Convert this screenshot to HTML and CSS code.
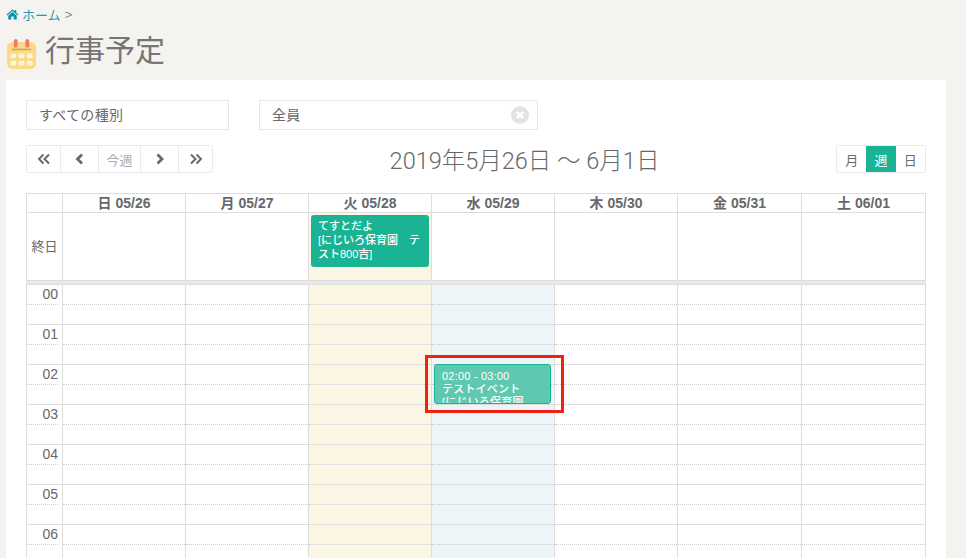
FILE: index.html
```html
<!DOCTYPE html>
<html lang="ja">
<head>
<meta charset="utf-8">
<title>行事予定</title>
<link rel="stylesheet" href="styles.css">
</head>
<body>
<nav class="crumbs">
  <svg class="home-icon" viewBox="0 0 26 22"><path d="M13 1 L1 11.2 L2.6 13 L13 4.2 L23.4 13 L25 11.2 L20.5 7.4 V2 H17.3 V4.6 Z M13 6.2 L4.5 13.4 V21 H10.5 V15 H15.5 V21 H21.5 V13.4 Z"/></svg>
  <a class="crumb-link">ホーム</a><span class="crumb-sep">&gt;</span>
</nav>
<header class="page-title">
  <svg class="cal-icon" viewBox="0 0 32 32">
    <rect x="1" y="4" width="30" height="28" rx="6" fill="#fcd983"/>
    <rect x="6" y="11" width="20" height="1.6" fill="#c9a860"/>
    <rect x="8" y="1" width="4" height="9" rx="2" fill="#f2786a"/>
    <rect x="20" y="1" width="4" height="9" rx="2" fill="#f2786a"/>
    <g fill="#fff5dc">
      <rect x="4.500" y="16" width="6" height="5" rx="1.500"/><rect x="13" y="16" width="6" height="5" rx="1.500"/><rect x="21.500" y="16" width="6" height="5" rx="1.500"/>
      <rect x="4.500" y="23.500" width="6" height="5" rx="1.500"/><rect x="13" y="23.500" width="6" height="5" rx="1.500"/><rect x="21.500" y="23.500" width="6" height="5" rx="1.500"/>
    </g>
  </svg>
  <h1>行事予定</h1>
</header>
<main class="card">
  <div class="filters">
    <div class="select select-type">すべての種別</div>
    <div class="select select-member">全員
      <svg class="clear-icon" viewBox="0 0 18 18"><circle cx="9" cy="9" r="9" fill="#e1e3e5"/><path d="M5.800 5.800 L12.200 12.200 M12.200 5.800 L5.800 12.200" stroke="#fff" stroke-width="2.600"/></svg>
    </div>
  </div>
  <div class="toolbar">
    <div class="btn-group">
      <button class="btn btn-first"><svg viewBox="0 0 14 12"><path d="M6.500 1.500 L2 6 L6.500 10.500 M12 1.500 L7.500 6 L12 10.500"/></svg></button>
      <button class="btn btn-single"><svg viewBox="0 0 14 12"><path d="M9 1.500 L4.500 6 L9 10.500"/></svg></button>
      <button class="btn btn-today">今週</button>
      <button class="btn btn-single"><svg viewBox="0 0 14 12"><path d="M4.500 1.500 L9 6 L4.500 10.500"/></svg></button>
      <button class="btn btn-last"><svg viewBox="0 0 14 12"><path d="M2 1.500 L6.500 6 L2 10.500 M7.500 1.500 L12 6 L7.500 10.500"/></svg></button>
    </div>
    <h2 class="range">2019年5月26日 〜 6月1日</h2>
    <div class="btn-group view-group">
      <button class="btn btn-view">月</button>
      <button class="btn btn-view is-active">週</button>
      <button class="btn btn-view">日</button>
    </div>
  </div>
  <section class="calendar">
    <div class="row head-row">
      <div class="cell"></div>
      <div class="cell">日 05/26</div><div class="cell">月 05/27</div><div class="cell">火 05/28</div><div class="cell">水 05/29</div><div class="cell">木 05/30</div><div class="cell">金 05/31</div><div class="cell">土 06/01</div>
    </div>
    <div class="row allday-row">
      <div class="cell allday-label">終日</div>
      <div class="cell"></div><div class="cell"></div>
      <div class="cell is-today"><div class="allday-event">てすとだよ<br>[にじいろ保育園　テスト800吉]</div></div>
      <div class="cell"></div><div class="cell"></div><div class="cell"></div><div class="cell"></div>
    </div>
    <div class="divider"></div>
    <div class="row time-grid">
      <div class="col axis">
        <div class="hour">00</div><div class="hour">01</div><div class="hour">02</div><div class="hour">03</div><div class="hour">04</div><div class="hour">05</div><div class="hour">06</div>
      </div>
      <div class="col"><div class="slot"></div><div class="slot"></div><div class="slot"></div><div class="slot"></div><div class="slot"></div><div class="slot"></div><div class="slot"></div></div>
      <div class="col"><div class="slot"></div><div class="slot"></div><div class="slot"></div><div class="slot"></div><div class="slot"></div><div class="slot"></div><div class="slot"></div></div>
      <div class="col is-today"><div class="slot"></div><div class="slot"></div><div class="slot"></div><div class="slot"></div><div class="slot"></div><div class="slot"></div><div class="slot"></div></div>
      <div class="col is-selected"><div class="slot"></div><div class="slot"></div><div class="slot"></div><div class="slot"></div><div class="slot"></div><div class="slot"></div><div class="slot"></div>
        <div class="timed-event"><div>02:00 - 03:00</div><div>テストイベント</div><div>[にじいろ保育園</div></div>
      </div>
      <div class="col"><div class="slot"></div><div class="slot"></div><div class="slot"></div><div class="slot"></div><div class="slot"></div><div class="slot"></div><div class="slot"></div></div>
      <div class="col"><div class="slot"></div><div class="slot"></div><div class="slot"></div><div class="slot"></div><div class="slot"></div><div class="slot"></div><div class="slot"></div></div>
      <div class="col"><div class="slot"></div><div class="slot"></div><div class="slot"></div><div class="slot"></div><div class="slot"></div><div class="slot"></div><div class="slot"></div></div>
    </div>
  </section>
</main>
<div class="highlight"></div>
</body>
</html>
```
FILE: styles.css
```css
* { box-sizing: border-box; }
html, body { height: 100%; overflow: hidden; }
body {
  margin: 0;
  background: #f4f3ef;
  color: #66686b;
  font-family: "Liberation Sans", "Noto Sans CJK JP", sans-serif;
  font-size: 13px;
  position: relative;
}
.crumbs {
  display: flex;
  align-items: center;
  height: 28px;
  padding: 0 0 0 6px;
  font-size: 13px;
}
.home-icon { width: 13px; height: 11px; fill: #1291ad; margin-right: 3px; }
.crumb-link { color: #1a9cbb; }
.crumb-sep { color: #888; margin-left: 4px; }
.page-title {
  display: flex;
  align-items: center;
  height: 52px;
  padding-left: 6px;
  padding-bottom: 7px;
}
.cal-icon { width: 31px; height: 31px; margin: 5px 8px 0 0; }
.page-title h1 {
  margin: 0;
  font-size: 30px;
  font-weight: 400;
  color: #757575;
  line-height: 1;
}
.card {
  margin: 0 20px 0 6px;
  padding: 20px;
  background: #fff;
  height: 478px;
  overflow: hidden;
}
.filters { display: flex; gap: 30px; }
.select {
  height: 30px;
  border: 1px solid #e5e6e7;
  display: flex;
  align-items: center;
  padding-bottom: 2px;
  font-size: 14px;
  letter-spacing: 0.300px;
  color: #66686b;
}
.select-type { width: 203px; padding-left: 12px; }
.select-member { width: 279px; padding-left: 12px; justify-content: space-between; padding-right: 8px; }
.clear-icon { width: 18px; height: 18px; margin-top: 2px; }
.toolbar {
  display: flex;
  align-items: center;
  justify-content: space-between;
  margin-top: 15px;
  height: 28px;
}
.btn-group {
  display: flex;
  border: 1px solid #e7eaec;
  border-radius: 3px;
  height: 28px;
  overflow: hidden;
}
.btn {
  border: 0;
  border-left: 1px solid #e7eaec;
  background: #fff;
  padding: 0;
  font: inherit;
  color: #676a6c;
  display: flex;
  align-items: center;
  justify-content: center;
}
.btn svg { width: 14px; height: 12px; fill: none; stroke: #676a6c; stroke-width: 2; }
.btn-first { width: 33px; border-left: 0; }
.btn-last { width: 34px; }
.btn-single { width: 38px; }
.btn-single svg { stroke-width: 2.800; }
.btn-today { width: 42px; color: #a9abad; }
.range {
  margin: 3px 0 0 0;
  font-size: 23.500px;
  font-weight: 300;
  color: #66686b;
  line-height: 28px;
  font-family: "Roboto", "Noto Sans CJK JP", sans-serif;
}
.view-group { width: 90px; }
.btn-view { flex: 1; border-left: 0; }
.btn-view.is-active { background: #1ab394; color: #fff; }
.calendar { margin-top: 20px; }
.row {
  display: grid;
  grid-template-columns: 35px repeat(5, 123px) 124px 124px;
  width: 900px;
  border-left: 1px solid #ddd;
  border-right: 1px solid #ddd;
}
.cell { border-left: 1px solid #ddd; }
.cell:first-child, .col:first-child { border-left: 0; }
.head-row {
  height: 20px;
  border-top: 1px solid #ddd;
  border-bottom: 1px solid #ddd;
  font-weight: 700;
  font-size: 14px;
  line-height: 18px;
  text-align: center;
  color: #66686b;
}
.allday-row { height: 67px; }
.allday-label {
  display: flex;
  align-items: center;
  justify-content: center;
  padding-bottom: 2px;
  font-size: 13px;
}
.cell.is-today, .col.is-today { background: #fcf7e4; }
.allday-event {
  margin: 2px 2px 0 2px;
  padding: 4px 7px 0;
  height: 52px;
  background: #1ab394;
  border-radius: 3px;
  color: #fff;
  font-size: 11px;
  line-height: 14px;
  font-weight: 500;
}
.divider {
  width: 900px;
  height: 4px;
  background: #e8e8e8;
  border-top: 1px solid #ddd;
}
.time-grid { height: 280px; }
.col { border-left: 1px solid #ddd; position: relative; }
.slot, .hour { height: 40px; border-top: 1px solid #ddd; }
.slot { padding-top: 19px; }
.slot::after, .hour::after {
  content: "";
  display: block;
  border-top: 1px dotted #ccc;
}
.col.is-selected { background: #ecf5f7; }
.hour {
  text-align: right;
  padding-right: 4px;
  font-size: 14px;
  line-height: 19px;
}
.timed-event {
  position: absolute;
  top: 80px;
  left: 2px;
  right: 3px;
  height: 40px;
  padding: 5px 7px 0;
  background: #5fc8b0;
  border: 1px solid #1ab394;
  border-radius: 3px;
  color: #fff;
  font-size: 11px;
  line-height: 13px;
  letter-spacing: 0.200px;
  overflow: hidden;
  font-weight: 500;
}
.highlight {
  position: absolute;
  left: 425px;
  top: 355px;
  width: 139px;
  height: 58px;
  border: 3px solid #f4200f;
}
```
